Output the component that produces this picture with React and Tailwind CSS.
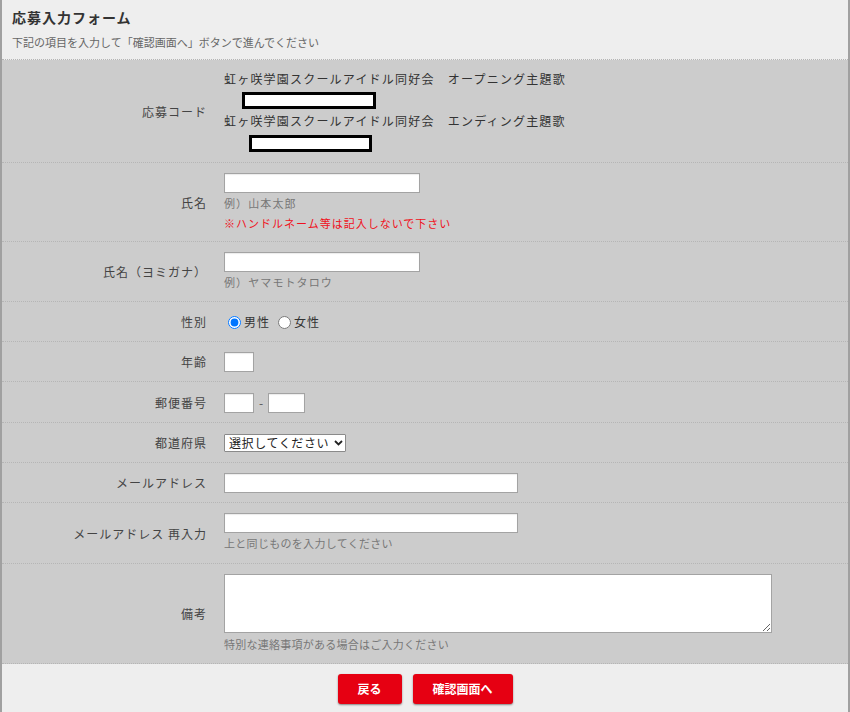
import React from "react";

function Row({ label, children, className = "" }) {
  return (
    <div className={"flex border-b border-dotted border-[#b5b5b5] " + className}>
      <div className="w-[213px] shrink-0 flex items-center justify-end pr-[8px] text-[12px] tracking-[1px] text-[#444] pt-[10px] pb-[9px]">
        {label}
      </div>
      <div className="flex-1 pl-[9px] pt-[10px] pb-[9px] text-[12px] text-[#333]">{children}</div>
    </div>
  );
}

const inputCls = "block h-[20px] bg-white border border-[#a3a3a3] shadow-[inset_0_1px_1px_rgba(0,0,0,0.08)] outline-none";

function Hint({ children, className = "" }) {
  return <div className={"h-[20px] leading-[20px] text-[11px] text-[#777] " + className}>{children}</div>;
}

export default function App() {
  return (
    <div className="w-[850px] min-h-[712px] bg-[#eeeeee] border-x-2 border-[#a0a0a0] font-['Noto_Sans_CJK_JP',sans-serif] text-[#333]">
      <div className="pl-[10px] pt-[7px] pb-[9px] border-b border-dotted border-[#b5b5b5]">
        <div className="text-[14px] leading-[20px] font-bold tracking-[1px] text-[#333]">応募入力フォーム</div>
        <div className="mt-[7px] text-[11px] leading-[16px] text-[#666]">下記の項目を入力して「確認画面へ」ボタンで進んでください</div>
      </div>

      <div className="bg-[#cccccc]">
        <Row label="応募コード">
          <div className="tracking-[1.2px]">
            <div className="h-[18px] leading-[18px]">虹ヶ咲学園スクールアイドル同好会　オープニング主題歌</div>
            <div className="mt-[4px] ml-[18px] w-[134px] h-[17px] border-[3px] border-black bg-white"></div>
            <div className="mt-[3px] h-[18px] leading-[18px]">虹ヶ咲学園スクールアイドル同好会　エンディング主題歌</div>
            <div className="mt-[5px] mb-[1px] ml-[25px] w-[123px] h-[17px] border-[3px] border-black bg-white"></div>
          </div>
        </Row>

        <Row label="氏名">
          <input className={inputCls + " w-[196px]"} />
          <Hint className="tracking-[1.1px]">例）山本太郎</Hint>
          <div className="h-[19px] leading-[20px] text-[11px] tracking-[1px] text-[#f01020]">※ハンドルネーム等は記入しないで下さい</div>
        </Row>

        <Row label="氏名（ヨミガナ）">
          <input className={inputCls + " w-[196px]"} />
          <Hint className="tracking-[1.1px]">例）ヤマモトタロウ</Hint>
        </Row>

        <Row label="性別">
          <div className="h-[20px] flex items-center text-[12px] tracking-[1px]">
            <input type="radio" name="sex" defaultChecked className="m-0 ml-[4px] mr-[3px] w-[13px] h-[13px]" />
            <span>男性</span>
            <input type="radio" name="sex" className="m-0 ml-[8px] mr-[3px] w-[13px] h-[13px]" />
            <span>女性</span>
          </div>
        </Row>

        <Row label="年齢">
          <input className={inputCls + " w-[30px]"} />
        </Row>

        <Row label="郵便番号">
          <div className="flex items-center h-[21px]">
            <input className={inputCls + " w-[30px]"} />
            <span className="mx-[5px] text-[12px] text-[#555]">-</span>
            <input className={inputCls + " w-[37px]"} />
          </div>
        </Row>

        <Row label="都道府県">
          <div className="h-[20px] flex items-center">
            <div className="relative">
              <select className="appearance-none block w-[122px] h-[18px] bg-white border border-[#8a8a8a] rounded-[1px] pl-[4px] pr-[12px] text-[12px] leading-[16px] tracking-[0.6px] text-[#222] outline-none">
                <option>選択してください</option>
              </select>
              <svg className="absolute right-[3px] top-[6px] pointer-events-none" width="9" height="6" viewBox="0 0 9 6">
                <path d="M1 1 L4.5 4.5 L8 1" fill="none" stroke="#222" strokeWidth="1.8" />
              </svg>
            </div>
          </div>
        </Row>

        <Row label="メールアドレス">
          <input className={inputCls + " w-[294px]"} />
        </Row>

        <Row label="メールアドレス 再入力">
          <input className={inputCls + " w-[294px]"} />
          <Hint className="tracking-[0.3px] mb-[1px]">上と同じものを入力してください</Hint>
        </Row>

        <Row label="備考">
          <textarea className="block w-[548px] h-[59px] bg-white border border-[#a3a3a3] outline-none" />
          <Hint className="mt-[1px] tracking-[0.25px]">特別な連絡事項がある場合はご入力ください</Hint>
        </Row>
      </div>

      <div className="flex justify-center gap-[11px] pt-[10px] pb-[10px]">
        <button className="w-[64px] h-[30px] bg-[#e60012] text-white text-[12px] font-bold rounded-[3px] shadow-[0_1px_2px_rgba(0,0,0,0.45)]">戻る</button>
        <button className="w-[100px] h-[30px] bg-[#e60012] text-white text-[12px] font-bold rounded-[3px] shadow-[0_1px_2px_rgba(0,0,0,0.45)]">確認画面へ</button>
      </div>
    </div>
  );
}
